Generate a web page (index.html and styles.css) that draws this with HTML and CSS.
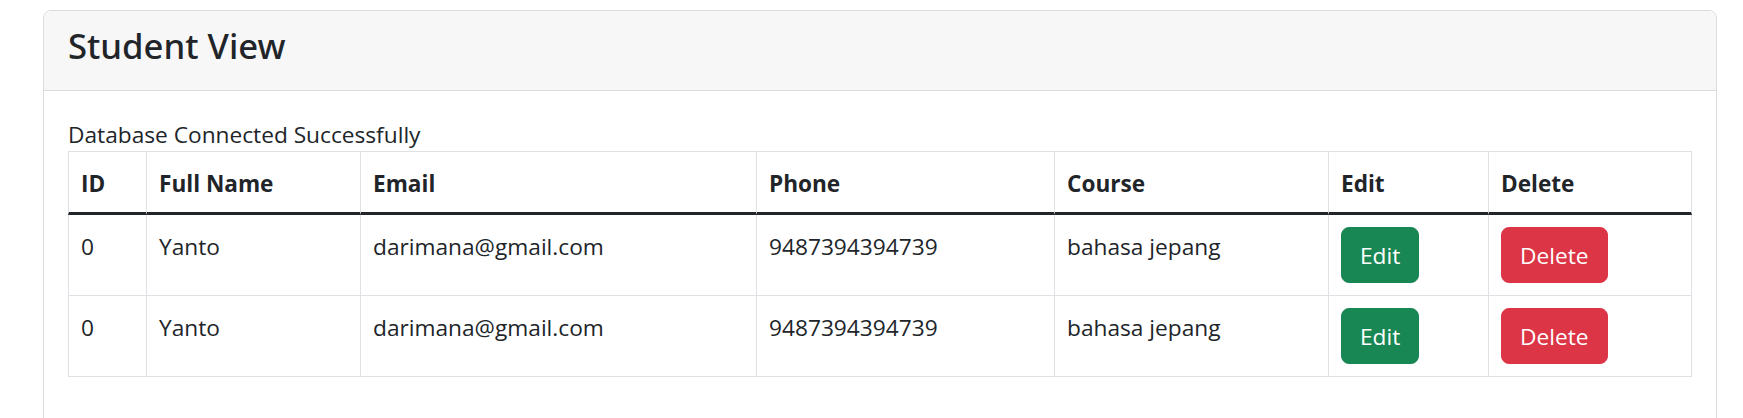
FILE: index.html
```html
<!DOCTYPE html>
<html lang="en">
<head>
<meta charset="utf-8">
<title>Student View</title>
<link rel="stylesheet" href="styles.css">
</head>
<body>
<div class="page">
  <div class="card">
    <div class="card-header">
      <h4 class="card-title">Student View</h4>
    </div>
    <div class="card-body">
      <div class="status">Database Connected Successfully</div>
      <table class="table">
        <thead>
          <tr>
            <th class="c-id">ID</th>
            <th class="c-name">Full Name</th>
            <th class="c-email">Email</th>
            <th class="c-phone">Phone</th>
            <th class="c-course">Course</th>
            <th class="c-edit">Edit</th>
            <th class="c-delete">Delete</th>
          </tr>
        </thead>
        <tbody>
          <tr>
            <td class="c-id">0</td>
            <td>Yanto</td>
            <td>darimana@gmail.com</td>
            <td>9487394394739</td>
            <td>bahasa jepang</td>
            <td class="c-action"><a class="btn btn-success" href="#">Edit</a></td>
            <td class="c-action"><button class="btn btn-danger" type="button">Delete</button></td>
          </tr>
          <tr>
            <td class="c-id">0</td>
            <td>Yanto</td>
            <td>darimana@gmail.com</td>
            <td>9487394394739</td>
            <td>bahasa jepang</td>
            <td class="c-action"><a class="btn btn-success" href="#">Edit</a></td>
            <td class="c-action"><button class="btn btn-danger" type="button">Delete</button></td>
          </tr>
        </tbody>
      </table>
    </div>
  </div>
</div>
</body>
</html>
```
FILE: styles.css
```css
* { box-sizing: border-box; }

html, body {
  margin: 0;
  background: #ffffff;
}

body {
  font-family: "Open Sans", "Noto Sans", sans-serif;
  font-size: 22.7px;
  line-height: 36px;
  color: #212529;
}

.page {
  padding: 10px 26px 0 43px;
}

.card {
  border: 1px solid #dcdcdc;
  border-radius: 8px;
  background: #ffffff;
  overflow: hidden;
}

.card-header {
  background: #f7f7f7;
  border-bottom: 1px solid #dcdcdc;
  padding: 13px 24px 11px;
}

.card-title {
  margin: 0 0 12px;
  font-family: "Noto Sans", "Open Sans", sans-serif;
  font-size: 34.7px;
  line-height: 43.2px;
  font-weight: 500;
}

.card-body {
  padding: 24px;
}

.status {
  height: 36px;
  padding-top: 2px;
  line-height: 36px;
}

.table {
  width: 100%;
  table-layout: fixed;
  border-collapse: separate;
  border-spacing: 0;
  margin: 0 0 24px;
  color: #212529;
}

.table th,
.table td {
  padding: 14px 12px 10px;
  text-align: left;
  vertical-align: top;
  border-right: 1px solid #dee2e6;
  border-bottom: 1px solid #dee2e6;
  line-height: 36px;
}

.table td.c-action {
  padding: 12px;
}

.table th {
  border-top: 1px solid #dee2e6;
  border-bottom: 3px solid #212529;
  font-weight: 700;
  font-size: 22.6px;
}

.table .c-id { border-left: 1px solid #dee2e6; }

.c-id { width: 79px; }
.c-name { width: 214px; }
.c-email { width: 396px; }
.c-phone { width: 298px; }
.c-course { width: 274px; }
.c-edit { width: 160px; }
.c-delete { width: 203px; }

.btn {
  display: inline-block;
  font-family: inherit;
  font-size: 22.7px;
  line-height: 36px;
  font-weight: 400;
  padding: 10px 18px 8px;
  border: 1px solid transparent;
  border-radius: 8px;
  color: #ffffff;
  text-decoration: none;
  cursor: pointer;
  vertical-align: top;
}

.btn-success {
  background: #198754;
  border-color: #198754;
}

.btn-danger {
  background: #dc3545;
  border-color: #dc3545;
}
```
